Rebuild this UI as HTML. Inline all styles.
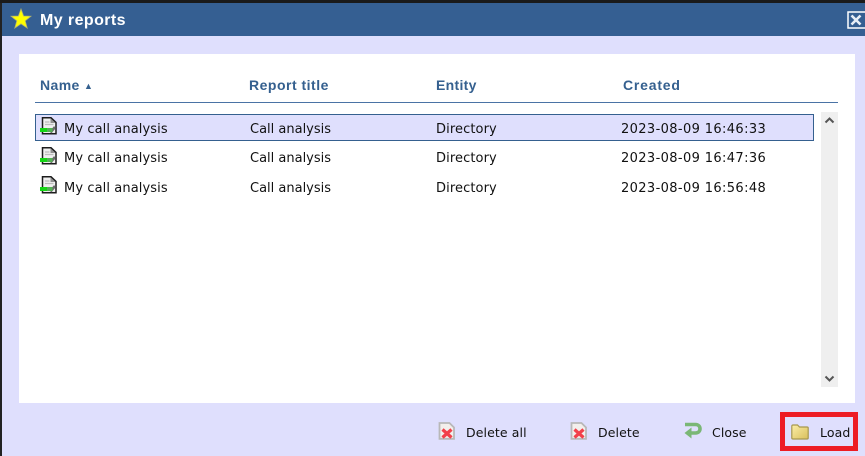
<!DOCTYPE html>
<html>
<head>
<meta charset="utf-8">
<style>
html,body{margin:0;padding:0;}
body{width:865px;height:456px;position:relative;overflow:hidden;background:#dfdffd;font-family:"DejaVu Sans",sans-serif;}
.a{position:absolute;white-space:nowrap;}
.h{font:bold 14px "Liberation Sans",sans-serif;color:#35608f;top:77px;letter-spacing:.4px;}
.t{font-size:13px;color:#111;line-height:14px;letter-spacing:.1px;}
.d{letter-spacing:.37px;}
.b{font-size:12.5px;color:#111;line-height:14px;top:426px;letter-spacing:.1px;}
</style>
</head>
<body>
<div class="a" style="left:0;top:0;width:865px;height:3px;background:#1a1a1a"></div>
<div class="a" style="left:0;top:3px;width:2px;height:453px;background:#222"></div>
<div class="a" style="left:2px;top:3px;width:863px;height:33px;background:#355f92"></div>
<svg class="a" style="left:10px;top:8px" width="22" height="22" viewBox="0 0 22 22"><path d="M11 1 L13.600 8 L21 8.200 L15.200 12.800 L17.200 20 L11 15.800 L4.800 20 L6.800 12.800 L1 8.200 L8.400 8 Z" fill="#ffff00" stroke="#b5b56a" stroke-width=".8"/></svg>
<div class="a" style="left:40px;top:11px;font:bold 16px 'Liberation Sans',sans-serif;color:#fff;line-height:19px;letter-spacing:.42px">My reports</div>
<svg class="a" style="left:847px;top:11px" width="18" height="18" viewBox="0 0 18 18"><rect x="1" y="1" width="18" height="16" fill="none" stroke="#fff" stroke-width="1.500"/><path d="M4.500 4.500 L13.500 13.500 M13.500 4.500 L4.500 13.500" stroke="#e8eef6" stroke-width="2.600"/></svg>

<div class="a" style="left:19px;top:54px;width:836px;height:349px;background:#fff"></div>
<div class="a h" style="left:40px">Name <span style="font-size:9px;position:relative;top:-1px">▲</span></div>
<div class="a h" style="left:249px;letter-spacing:.5px">Report title</div>
<div class="a h" style="left:436px;letter-spacing:.3px">Entity</div>
<div class="a h" style="left:623px;letter-spacing:.8px">Created</div>
<div class="a" style="left:35px;top:102px;width:803px;height:1px;background:#4a73a5"></div>

<div class="a" style="left:35px;top:114px;width:777px;height:25px;background:#dfdffd;border:1px solid #35608f"></div>

<div class="a" style="left:821px;top:112px;width:17px;height:275px;background:#efefef"></div>
<svg class="a" style="left:824px;top:116px" width="11" height="8" viewBox="0 0 11 8"><path d="M1.500 6.500 L5.500 2.500 L9.500 6.500" fill="none" stroke="#555" stroke-width="2"/></svg>
<svg class="a" style="left:824px;top:375px" width="11" height="8" viewBox="0 0 11 8"><path d="M1.500 1.500 L5.500 5.500 L9.500 1.500" fill="none" stroke="#555" stroke-width="2"/></svg>

<svg width="0" height="0" style="position:absolute"><defs>
<symbol id="doc" viewBox="0 0 18 18"><path d="M2.500 .8 H11 L16 5.500 V16.800 H2.500 Z" fill="#efefef" stroke="#1c1c1c" stroke-width="1.500"/><path d="M10.500 1.500 V6 H15.500 Z" fill="#8f8f8f"/><path d="M5 5H9.500M5 7.500H13.500" stroke="#bbb" stroke-width="1.200"/><path d="M10.500 15.500 L15 10" stroke="#6c6c6c" stroke-width="2.600"/><path d="M0 11H12.500V15H0Z" fill="#14d614"/><path d="M7 11H12.500V15H7Z" fill="#55b055"/></symbol>
<symbol id="del" viewBox="0 0 18 18"><path d="M1.500 1 H11.500 L16 5.500 V16.800 H1.500 Z" fill="#f3efec" stroke="#b8b8b8" stroke-width="1.800"/><path d="M4.500 7.500 L13.500 15.500 M13.500 7.500 L4.500 15.500" stroke="#f2404a" stroke-width="3.200"/></symbol>
</defs></svg>

<svg class="a" style="left:40px;top:117px" width="18" height="18"><use href="#doc"/></svg>
<svg class="a" style="left:40px;top:147px" width="18" height="18"><use href="#doc"/></svg>
<svg class="a" style="left:40px;top:176px" width="18" height="18"><use href="#doc"/></svg>

<div class="a t" style="left:64px;top:123px">My call analysis</div>
<div class="a t" style="left:250px;top:123px;letter-spacing:0">Call analysis</div>
<div class="a t" style="left:436px;top:123px">Directory</div>
<div class="a t d" style="left:621px;top:123px">2023-08-09 16:46:33</div>

<div class="a t" style="left:64px;top:152px">My call analysis</div>
<div class="a t" style="left:250px;top:152px;letter-spacing:0">Call analysis</div>
<div class="a t" style="left:436px;top:152px">Directory</div>
<div class="a t d" style="left:621px;top:152px">2023-08-09 16:47:36</div>

<div class="a t" style="left:64px;top:182px">My call analysis</div>
<div class="a t" style="left:250px;top:182px;letter-spacing:0">Call analysis</div>
<div class="a t" style="left:436px;top:182px">Directory</div>
<div class="a t d" style="left:621px;top:182px">2023-08-09 16:56:48</div>

<svg class="a" style="left:438px;top:422px" width="18" height="18"><use href="#del"/></svg>
<div class="a b" style="left:466px">Delete all</div>
<svg class="a" style="left:570px;top:422px" width="18" height="18"><use href="#del"/></svg>
<div class="a b" style="left:598px">Delete</div>
<svg class="a" style="left:684px;top:422px" width="18" height="18" viewBox="0 0 18 18"><path d="M1 2.500 H11.500 C17.500 2.500 17.500 11 11.500 11 H6" fill="none" stroke="#7ab776" stroke-width="3.600"/><path d="M7.500 5.500 V16.500 L0.500 11 Z" fill="#7ab776"/></svg>
<div class="a b" style="left:712px">Close</div>

<div class="a" style="left:780px;top:412px;width:68px;height:29px;border:5px solid #ed1c24"></div>
<svg class="a" style="left:791px;top:424px" width="18" height="16" viewBox="0 0 18 16"><defs><linearGradient id="g" x1="0" y1="0" x2="1" y2="1"><stop offset="0" stop-color="#fbeea8"/><stop offset="1" stop-color="#d9bf5c"/></linearGradient></defs><path d="M.8 2.500 Q.8 1 2 1 H6.500 L8.500 3 H16 Q17.200 3 17.200 4 V14 Q17.200 15 16 15 H2 Q.8 15 .8 14 Z" fill="url(#g)" stroke="#a8994e" stroke-width="1.200"/></svg>
<div class="a b" style="left:820px">Load</div>
</body>
</html>
